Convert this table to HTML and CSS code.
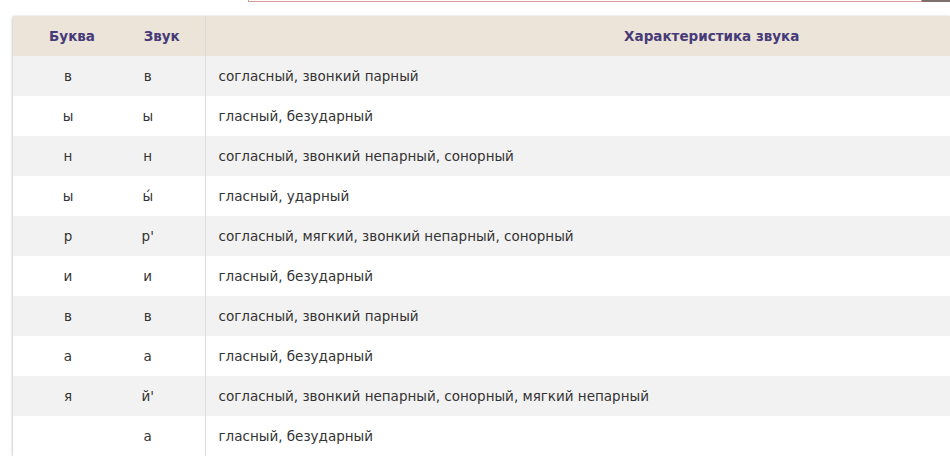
FILE: index.html
```html
<!DOCTYPE html>
<html lang="ru">
<head>
  <meta charset="UTF-8">
  <title>Фонетический разбор</title>
  <link rel="stylesheet" href="styles.css">
</head>
<body>

<!-- SEARCH BAR (scrolled off top) -->
<div class="search-row">
  <div class="search-input"></div>
  <div class="search-btn"></div>
</div>

<!-- PHONETIC TABLE -->
<table class="phon-table">
  <thead>
    <tr>
      <th class="c-letter">Буква</th>
      <th class="c-sound">Звук</th>
      <th class="c-desc">Характеристика звука</th>
    </tr>
  </thead>
  <tbody>
    <tr><td class="c-letter">в</td><td class="c-sound">в</td><td class="c-desc">согласный, звонкий парный</td></tr>
    <tr><td class="c-letter">ы</td><td class="c-sound">ы</td><td class="c-desc">гласный, безударный</td></tr>
    <tr><td class="c-letter">н</td><td class="c-sound">н</td><td class="c-desc">согласный, звонкий непарный, сонорный</td></tr>
    <tr><td class="c-letter">ы</td><td class="c-sound">ы́</td><td class="c-desc">гласный, ударный</td></tr>
    <tr><td class="c-letter">р</td><td class="c-sound">р'</td><td class="c-desc">согласный, мягкий, звонкий непарный, сонорный</td></tr>
    <tr><td class="c-letter">и</td><td class="c-sound">и</td><td class="c-desc">гласный, безударный</td></tr>
    <tr><td class="c-letter">в</td><td class="c-sound">в</td><td class="c-desc">согласный, звонкий парный</td></tr>
    <tr><td class="c-letter">а</td><td class="c-sound">а</td><td class="c-desc">гласный, безударный</td></tr>
    <tr><td class="c-letter">я</td><td class="c-sound">й'</td><td class="c-desc">согласный, звонкий непарный, сонорный, мягкий непарный</td></tr>
    <tr><td class="c-letter"></td><td class="c-sound">а</td><td class="c-desc">гласный, безударный</td></tr>
  </tbody>
</table>

</body>
</html>
```

FILE: styles.css
```css
body {
  margin: 0;
  background: #fff;
  font-family: "DejaVu Sans", Verdana, sans-serif;
  color: #333;
}
.search-row {
  display: flex;
  height: 2px;
  margin-left: 248px;
}
.search-input {
  width: 674px;
  border: 1px solid #d99a9a;
  border-top: none;
  background: #fff;
  box-sizing: border-box;
}
.search-btn {
  flex: 1;
  background: #7d6d6d;
}
.phon-table {
  margin: 14px 0 0 13px;
  width: 937px;
  table-layout: fixed;
  border-collapse: collapse;
  box-shadow: 0 1px 3px rgba(0, 0, 0, 0.35);
  font-size: 13.5px;
}
.phon-table th,
.phon-table td {
  box-sizing: border-box;
  height: 40px;
  padding: 0;
  text-align: center;
}
.phon-table th {
  background: #ece4d8;
  color: #463b78;
  font-size: 13.5px;
  font-weight: bold;
}
.phon-table tbody tr:nth-child(odd) td {
  background: #f2f2f2;
}
.c-letter { width: 110px; }
.c-sound { width: 82px; border-right: 1px solid #dcdcdc; }
th.c-letter { padding-left: 8px; }
th.c-sound { padding-right: 4px; }
td.c-sound { padding-right: 32px; }
.phon-table th.c-desc {
  padding-left: 268px;
}
.phon-table td.c-desc {
  text-align: left;
  padding-left: 13px;
}
```
